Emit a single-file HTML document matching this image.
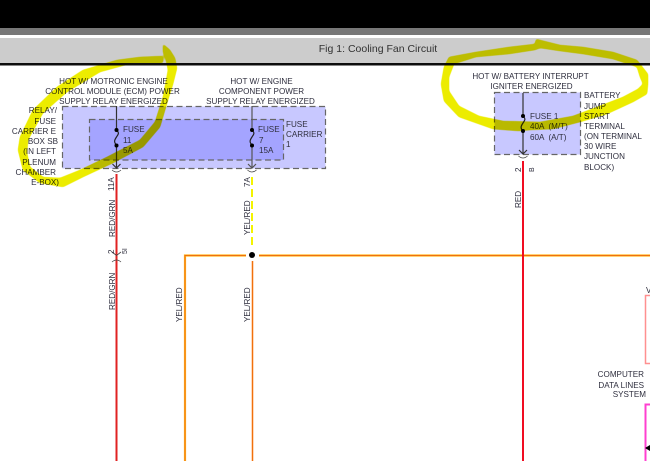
<!DOCTYPE html>
<html><head><meta charset="utf-8"><style>
html,body{margin:0;padding:0;background:#fff}
svg{display:block}
text{font-family:"Liberation Sans",sans-serif;font-size:8.1px;fill:#2e2e3e}
</style></head><body>
<svg width="650" height="461" viewBox="0 0 650 461" xmlns="http://www.w3.org/2000/svg">
<defs>
<filter id="s" x="-5%" y="-5%" width="110%" height="110%" color-interpolation-filters="sRGB">
<feGaussianBlur in="SourceGraphic" stdDeviation="1.400"/>
<feComponentTransfer><feFuncA type="linear" slope="3.500" intercept="-1.250"/></feComponentTransfer>
</filter>
<filter id="b" x="0" y="0" width="100%" height="100%" filterUnits="userSpaceOnUse" primitiveUnits="userSpaceOnUse"><feGaussianBlur stdDeviation="0.300"/></filter>
</defs>
<g filter="url(#b)">
<rect width="650" height="461" fill="#fff"/>
<rect width="650" height="28" fill="#000"/>
<rect y="28" width="650" height="7" fill="#777"/>
<rect y="38" width="650" height="25" fill="#ccc"/>
<rect y="63" width="650" height="2.5" fill="#111"/>
<text x="378" y="52" text-anchor="middle" style="font-size:10.5px;fill:#333">Fig 1: Cooling Fan Circuit</text>

<rect x="62.500" y="106.500" width="263" height="62" fill="#c8c8ff" stroke="#666" stroke-width="1.200" stroke-dasharray="6 3.500"/>
<rect x="89.500" y="119.500" width="194" height="40.500" fill="#a4a4ff" stroke="#666" stroke-width="1.200" stroke-dasharray="6 3.500"/>
<rect x="494.500" y="92.500" width="86" height="62" fill="#c8c8ff" stroke="#666" stroke-width="1.200" stroke-dasharray="6 3.500"/>

<g fill="none" stroke-width="1.200" stroke="#333">
<path d="M116.500 106V130M116.500 145V168M112.500 164l4 4 4-4"/>
<path d="M252 106V130M252 145V168M248 164l4 4 4-4" stroke="#555"/>
<path d="M523 93V116M523 131V154M519 150l4 4 4-4"/>
<path d="M116.500 130c3 3 2 4 0 7s-3 5 0 8" stroke="#222"/>
<path d="M252 130c3 3 2 4 0 7s-3 5 0 8" stroke="#222"/>
<path d="M523 116c3 3 2 4 0 7s-3 5 0 8" stroke="#222"/>
<path d="M112 170q4.500 4 9 0M247.500 170q4.500 4 9 0M518.500 156q4.500 4 9 0" stroke="#444" stroke-width=".8"/>
</g>
<g fill="#000">
<circle cx="116.500" cy="130" r="2"/><circle cx="116.500" cy="145.500" r="2"/>
<circle cx="252" cy="130" r="2"/><circle cx="252" cy="145.500" r="2"/>
<circle cx="523" cy="116" r="2"/><circle cx="523" cy="131" r="2"/>
</g>

<g fill="none">
<path d="M116.500 174V461" stroke="#e02020" stroke-width="2"/>
<path d="M112 252l4.500 3.500 4.500-3.500M112 262q4.500-4 9 0" stroke="#444" stroke-width=".8"/>
<path d="M252 177V249" stroke="#f4f400" stroke-width="2" stroke-dasharray="8 4"/>
<path d="M246 255.500H185V461M259 255.500H650" stroke="#ffb820" stroke-width="2.200"/>
<path d="M252.500 261V461" stroke="#ffc090" stroke-width="2.200"/>
<path d="M246 255.500H185V461M259 255.500H650M252.500 261V461" stroke="#f07010" stroke-width="1"/>
<path d="M523 161V461" stroke="#f01020" stroke-width="2"/>
<path d="M650 295.500H645.500V363.500H650" stroke="#ff9090" stroke-width="1.500"/>
<path d="M650 404.500H645.500V461" stroke="#ff40d0" stroke-width="2"/>
</g>
<circle cx="252" cy="255" r="3" fill="#000"/>
<path d="M650 445l-5 3 5 3z" fill="#000"/>

<g text-anchor="middle">
<text x="113.500" y="84">HOT W/ MOTRONIC ENGINE</text>
<text x="112.500" y="94">CONTROL MODULE (ECM) POWER</text>
<text x="113.500" y="104">SUPPLY RELAY ENERGIZED</text>
<text x="261.500" y="84">HOT W/ ENGINE</text>
<text x="261.500" y="94">COMPONENT POWER</text>
<text x="260.500" y="104">SUPPLY RELAY ENERGIZED</text>
<text x="530.500" y="79">HOT W/ BATTERY INTERRUPT</text>
<text x="531.500" y="89">IGNITER ENERGIZED</text>
</g>
<g text-anchor="end">
<text x="57" y="113">RELAY/</text>
<text x="56" y="124">FUSE</text>
<text x="56" y="134">CARRIER E</text>
<text x="58" y="144">BOX SB</text>
<text x="56" y="154">(IN LEFT</text>
<text x="56" y="165">PLENUM</text>
<text x="56" y="175">CHAMBER</text>
<text x="59" y="185">E-BOX)</text>
<text x="644" y="377">COMPUTER</text>
<text x="644" y="388">DATA LINES</text>
<text x="646" y="397">SYSTEM</text>
</g>
<text x="646" y="293">V</text>
<text x="123" y="132">FUSE</text><text x="123" y="143">11</text><text x="123" y="153">5A</text>
<text x="258" y="132">FUSE</text><text x="259" y="143">7</text><text x="259" y="153">15A</text>
<text x="286" y="127">FUSE</text><text x="286" y="137">CARRIER</text><text x="286" y="147">1</text>
<text x="530" y="119">FUSE 1</text><text x="530" y="129" xml:space="preserve">40A  (M/T)</text><text x="530" y="140" xml:space="preserve">60A  (A/T)</text>
<g>
<text x="584" y="98">BATTERY</text><text x="584" y="109">JUMP</text><text x="584" y="119">START</text>
<text x="584" y="129">TERMINAL</text><text x="584" y="139">(ON TERMINAL</text><text x="584" y="149">30 WIRE</text>
<text x="584" y="159">JUNCTION</text><text x="584" y="170">BLOCK)</text>
</g>
<g>
<text transform="translate(114,191) rotate(-90)">11A</text>
<text transform="translate(250,187) rotate(-90)">7A</text>
<text transform="translate(115,237) rotate(-90)">RED/GRN</text>
<text transform="translate(115,310) rotate(-90)">RED/GRN</text>
<text transform="translate(114,254) rotate(-90)">2</text>
<text transform="translate(127,254) rotate(-90)" style="font-size:7px">5I</text>
<text transform="translate(250,235) rotate(-90)">YEL/RED</text>
<text transform="translate(250,322) rotate(-90)">YEL/RED</text>
<text transform="translate(182,322) rotate(-90)">YEL/RED</text>
<text transform="translate(521,208) rotate(-90)">RED</text>
<text transform="translate(521,172) rotate(-90)">2</text>
<text transform="translate(534,172) rotate(-90)" style="font-size:7px">B</text>
</g>

<g style="mix-blend-mode:multiply" filter="url(#s)">
<g fill="#ecec00" stroke="#ecec00" stroke-width=".6" stroke-linejoin="round">
<path d="M163 44L170 50 175 58 177 68 173 84 168 100 160 127 143 147 113 163 83 177 63 187 40 183 23 170 18 150 20 137 33 110 57 87 83 70 117 60 140 57 163 56 163 63 133 63 100 72 67 92 43 113 28 140 27 153 30 167 43 177 60 178 80 170 107 157 140 140 155 122 163 97 168 70 166 60 163 52Z"/>
<path fill-rule="evenodd" d="M536 39L560 45 583 47 613 52 637 60 648 74 648 84 647 94 633 102 607 114 580 122 553 129 530 130 519 131 493 129 459 117 444 101 441 84 444 67 449 57 476 52 509 47 535 44ZM535 50L509 54 476 57 454 64 449 77 449 91 459 106 479 116 503 121 540 122 573 116 597 107 623 97 638 89 643 84 640 77 637 67 613 59 583 54 560 51 540 48Z"/>
</g>
</g>
</g>
</svg>
</body></html>
